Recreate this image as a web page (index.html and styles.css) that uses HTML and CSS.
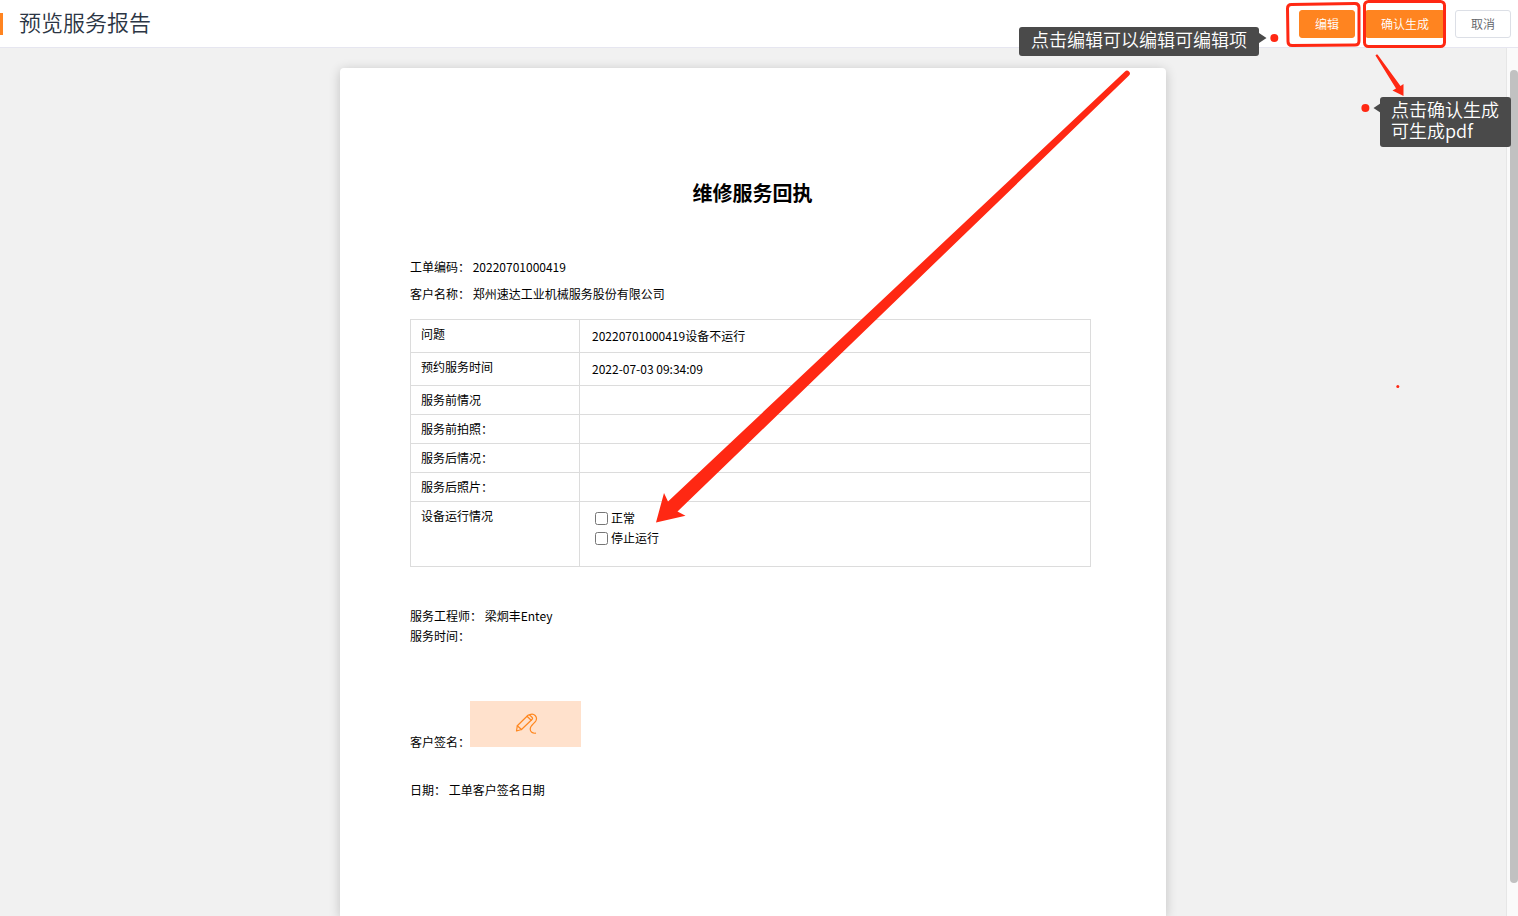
FILE: index.html
```html
<!DOCTYPE html>
<html lang="zh-CN">
<head>
<meta charset="utf-8">
<meta name="viewport" content="width=device-width, initial-scale=1">
<title>预览服务报告</title>
<link rel="stylesheet" href="styles.css">
</head>
<body>
<header class="topbar">
  <h1 class="topbar-title">预览服务报告</h1>
  <div class="actions">
    <button type="button" class="btn btn-primary">编辑</button>
    <button type="button" class="btn btn-primary">确认生成</button>
    <button type="button" class="btn">取消</button>
  </div>
  <svg class="marks" width="260" height="400" viewBox="1258 0 260 400" aria-hidden="true">
    <path class="frame" d="M1291.500 4.500L1355 3.500Q1359 3.500 1359 7.500V41Q1359 45 1355 45L1292 45.500Q1288 45.500 1288 41.500L1287.500 8.500Q1287.500 4.500 1291.500 4.500Z"/>
    <rect class="frame" x="1364.500" y="1.500" width="80" height="45" rx="4"/>
    <path class="ink" d="M1375.500 55.500Q1376 54 1377.500 54.500L1400.500 86L1403.500 84L1403.500 96L1392.500 90.500L1396 88.500Z"/>
    <circle class="ink" cx="1274.300" cy="38" r="4"/>
    <circle class="ink" cx="1365.400" cy="108" r="4"/>
    <circle class="ink" cx="1397.800" cy="386.500" r="1.500"/>
    <path class="tip-arrow" d="M1259 33L1266.500 38L1259 43ZM1381 103L1373.500 108L1381 113Z"/>
  </svg>
  <div class="tip tip-edit">点击编辑可以编辑可编辑项</div>
  <div class="tip tip-confirm">点击确认生成可生成pdf</div>
</header>
<div class="workspace">
  <main class="viewport">
    <article class="paper">
      <h2 class="paper-title">维修服务回执</h2>
      <p class="line">工单编码： 20220701000419</p>
      <p class="line">客户名称： 郑州速达工业机械服务股份有限公司</p>
      <table class="report">
        <tbody>
          <tr><th scope="row">问题</th><td>20220701000419设备不运行</td></tr>
          <tr><th scope="row">预约服务时间</th><td>2022-07-03 09:34:09</td></tr>
          <tr><th scope="row">服务前情况</th><td></td></tr>
          <tr><th scope="row">服务前拍照：</th><td></td></tr>
          <tr><th scope="row">服务后情况：</th><td></td></tr>
          <tr><th scope="row">服务后照片：</th><td></td></tr>
          <tr><th scope="row">设备运行情况</th><td class="options">
            <label class="option"><input type="checkbox"><span>正常</span></label>
            <label class="option"><input type="checkbox"><span>停止运行</span></label>
          </td></tr>
        </tbody>
      </table>
      <div class="engineer">
        <p>服务工程师： 梁炯丰Entey</p>
        <p>服务时间：</p>
      </div>
      <div class="signature">
        <span>客户签名：</span>
        <button type="button" class="sign-box" aria-label="客户签名">
          <svg width="24" height="24" viewBox="8 7 24 24" fill="none" stroke="#ff871f" stroke-width="1.200" stroke-linejoin="round" stroke-linecap="round" aria-hidden="true">
            <path d="M10.500 26L11.300 20.800L22 10.300Q23 9.500 24 10.300L26.200 12.500Q27 13.400 26.200 14.300L15.500 24.500Z"/>
            <path d="M11.300 20.800L15.500 24.500M21 11.300L25.200 15.300"/>
            <path d="M23.500 9.800C28 7.500 32 12 29.800 16C28 18.700 24.200 20.500 24.200 24C24.200 27 26.500 28.500 29.500 28.200"/>
          </svg>
        </button>
      </div>
      <p class="date">日期： 工单客户签名日期</p>
      <svg class="pointer" width="500" height="460" viewBox="300 0 500 460" aria-hidden="true">
        <path class="ink" d="M316 454.500L324 425L328 433.500L785 3.500A2.800 2.800 0 0 1 789 7.500L337.500 443.500L345.500 447.800Z"/>
      </svg>
    </article>
  </main>
  <div class="scrollbar" aria-hidden="true"><div class="thumb"></div></div>
</div>
</body>
</html>
```
FILE: styles.css
```css
* { box-sizing: border-box; }

body {
  margin: 0;
  height: 100vh;
  display: flex;
  flex-direction: column;
  overflow: hidden;
  background: #f1f1f1;
  color: #000;
  font: 12px/20px "Noto Sans CJK SC", sans-serif;
}

h1, h2, p { margin: 0; }

.topbar {
  position: relative;
  z-index: 1;
  flex: none;
  display: flex;
  align-items: center;
  justify-content: space-between;
  height: 48px;
  padding-right: 7px;
  background: #fff;
  border-bottom: 1px solid #e6e6f0;
}

.topbar-title {
  height: 22px;
  padding-left: 16px;
  border-left: 3px solid #ff8420;
  color: #2b3544;
  font-size: 22px;
  font-weight: 350;
  line-height: 16px;
}

.actions { display: flex; gap: 10px; }

.btn {
  height: 28px;
  padding: 0 15px;
  border: 1px solid #dcdfe6;
  border-radius: 3px;
  background: #fff;
  color: #606266;
  font: 350 12px/20px "Noto Sans CJK SC", sans-serif;
}

.btn-primary {
  border-color: #ff8420;
  background: #ff8420;
  color: #fff;
}

.marks {
  position: absolute;
  top: 0;
  right: 0;
  pointer-events: none;
}

.ink { fill: #ff2813; }
.frame { fill: none; stroke: #ff2813; stroke-width: 3; }
.tip-arrow { fill: #4a4a4a; }

.tip {
  position: absolute;
  border-radius: 3px;
  background: #4a4a4a;
  color: #fff;
  font-size: 18px;
  font-weight: 350;
}

.tip-edit {
  top: 27px;
  right: 259px;
  padding: 0 12px 5px;
  line-height: 24px;
  white-space: nowrap;
}

.tip-confirm {
  top: 97px;
  right: 7px;
  width: 131px;
  padding: 2px 11px 6px;
  line-height: 21px;
}

.workspace {
  flex: 1;
  min-height: 0;
  display: flex;
}

.viewport {
  flex: 1;
  display: flex;
  justify-content: center;
  padding-top: 20px;
}

.paper {
  position: relative;
  width: 826px;
  padding: 115px 75px 0 70px;
  border-radius: 4px 4px 0 0;
  background: #fff;
  box-shadow: 0 2px 12px rgba(0, 0, 0, 0.2);
}

.paper-title {
  margin-bottom: 54px;
  padding-left: 4px;
  font-size: 20px;
  font-weight: 700;
  line-height: 20px;
  text-align: center;
}

.line { margin-bottom: 7px; }

.report {
  width: 100%;
  margin-top: 15px;
  border-collapse: collapse;
  table-layout: fixed;
}

.report th,
.report td {
  border: 1px solid #dcdcdc;
  vertical-align: top;
  text-align: left;
  font-weight: 400;
}

.report th { width: 169px; padding: 4px 10px; }
.report td { padding: 6px 12px; }
.report td:empty { padding: 0; }
.report .options { padding-bottom: 18px; }

.option { display: flex; align-items: center; height: 20px; }
.option input {
  width: 13px;
  height: 13px;
  margin: 0 3px;
}

.engineer { margin-top: 39px; }

.signature {
  display: flex;
  align-items: flex-end;
  margin-top: 55px;
}

.sign-box {
  display: flex;
  align-items: center;
  justify-content: center;
  width: 111px;
  height: 46px;
  margin-bottom: 5px;
  padding: 0;
  border: 0;
  background: #ffe1cc;
}

.date { margin-top: 28px; }

.pointer {
  position: absolute;
  top: 0;
  left: 300px;
  pointer-events: none;
}

.scrollbar {
  flex: none;
  width: 12px;
  padding: 22px 0 33px 3px;
  border-left: 1px solid #e6e6e6;
  background: #fafafa;
}

.thumb {
  height: 100%;
  border-radius: 4px;
  background: #c1c1c1;
}
```
